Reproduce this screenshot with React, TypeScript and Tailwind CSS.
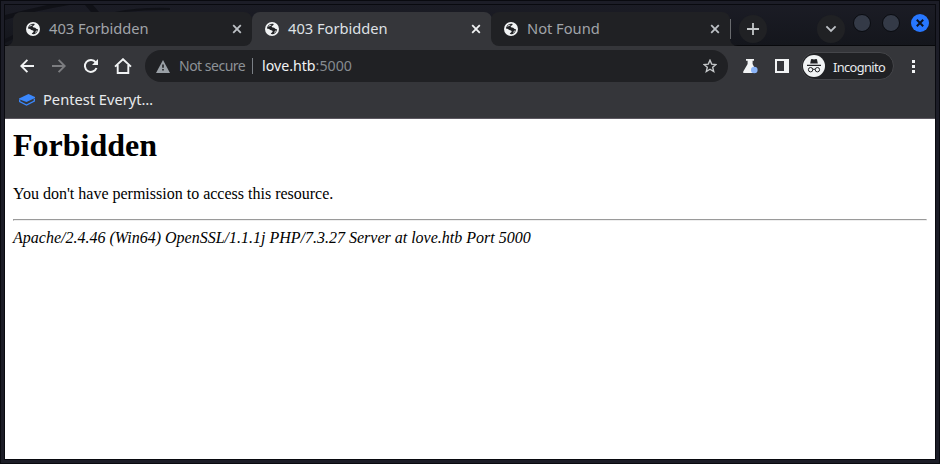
import React from "react";
import clsx from "clsx";

function Globe() {
  return (
    <svg width="14" height="14" viewBox="0 0 14 14" className="block shrink-0">
      <circle cx="7" cy="7" r="7" fill="#f1f3f4" />
      <path
        d="M8.600 1.900c.3 1.500-1.800 1.500-2 2.900 0 1 2.800.7 3.200 1.500.5.9 1.300.9 2.300.9-.1 2-1.500 4-3.400 4.700-1 .4-2 .4-2.900.2.200-1.200 1.500-1.300 1.800-2.300.2-.9-.3-1.500-1.400-1.600C4.800 8.100 4.600 6.800 3.200 6.700L1.900 6.400C2.300 3.400 5.300 1.200 8.600 1.900z"
        fill="#202124"
      />
      <path d="M6.300 3.200L4.400 3.500 3.800 4.700M10.800 8.500L9.500 10.500" stroke="#f1f3f4" strokeWidth=".9" fill="none" />
    </svg>
  );
}

function Cross({ color }: { color: string }) {
  return (
    <svg width="10" height="10" viewBox="0 0 10 10" className="block shrink-0">
      <path d="M1.2 1.2l7.6 7.6M8.8 1.2L1.2 8.8" stroke={color} strokeWidth="1.8" />
    </svg>
  );
}

function Tab({ title, shape, wrap, active }: { title: string; shape: string; wrap: string; active?: boolean }) {
  return (
    <div className={clsx("h-[34px] shrink-0 bg-[linear-gradient(#35363a,#35363a)] bg-size-[12px_12px] bg-no-repeat", wrap)}>
      <div
        className={clsx(
          "flex h-full items-center pl-[13px]",
          shape,
          active ? "bg-[#35363a] pr-[11px] text-[#dfe1e5]" : "bg-[#202124] pr-[10px] text-[#a0a4a9]",
        )}
      >
        <Globe />
        <span className="ml-[9px] flex-1 pb-[2px] text-[14.67px] leading-5 whitespace-nowrap">{title}</span>
        <Cross color={active ? "#f1f3f4" : "#bdc1c6"} />
      </div>
    </div>
  );
}

// Concave foot that joins a tab to the toolbar.
function Foot({ flip }: { flip?: boolean }) {
  return (
    <svg width="8" height="8" viewBox="0 0 8 8" className={clsx("block shrink-0 self-end", flip && "-scale-x-100")}>
      <path d="M8 0v8H0c5 0 8-3 8-8z" fill="#202124" />
    </svg>
  );
}

function Arrow({ flip }: { flip?: boolean }) {
  return (
    <svg width="14" height="14" viewBox="0 0 14 14" className={clsx("block shrink-0", flip && "-scale-x-100")}>
      <path d="M14 7H1.3M7.4.8L1.3 7l6.1 6.2" fill="none" stroke={flip ? "#7c7d80" : "#f1f3f4"} strokeWidth="1.9" />
    </svg>
  );
}

function TabStrip() {
  return (
    <div className="relative flex h-[41px] bg-linear-to-b from-[#1b1c25] to-[#14161c] pt-[7px] shadow-[inset_0_-1px_0_#08090c]">
      <svg width="240" height="41" viewBox="0 0 240 41" className="absolute top-0 left-0">
        <path d="M0 10Q20 5 42 0h22Q28 6 0 15zM0 34l8-4v4l-8 4zM80 0h8l6 7h-8zM110 7q25-5 55-4v2q-28 0-45 2z" fill="#101117" />
      </svg>
      <div className="relative flex h-[34px]">
        <Foot />
        <Tab title="403 Forbidden" wrap="w-[239px] bg-right-bottom" shape="rounded-t-lg rounded-br-lg" />
        <Tab title="403 Forbidden" wrap="w-[240px] bg-bottom" shape="rounded-t-lg" active />
        <Tab title="Not Found" wrap="-ml-px w-[239px] bg-left-bottom" shape="rounded-t-lg rounded-bl-lg" />
        <div className="mt-[7px] h-5 w-px bg-[#696b6f]" />
        <div className="-ml-px self-end">
          <Foot flip />
        </div>
      </div>
      <div className="mt-[3px] ml-px flex size-7 items-center justify-center rounded-full bg-[#202124]">
        <svg width="12" height="12" viewBox="0 0 12 12">
          <path d="M6 0v12M0 6h12" stroke="#c4c7c9" strokeWidth="1.8" />
        </svg>
      </div>
      <div className="mt-[3px] ml-[50px] flex size-7 items-center justify-center rounded-full bg-[#202124]">
        <svg width="12" height="8" viewBox="0 0 12 8">
          <path d="M1.4 1.3L6 5.9l4.6-4.6" fill="none" stroke="#bdc1c6" strokeWidth="1.8" />
        </svg>
      </div>
      <div className="mt-[2px] ml-2 size-[18px] rounded-full border border-[#090b10] bg-[#343a47]" />
      <div className="mt-[2px] ml-[11px] size-[18px] rounded-full border border-[#090b10] bg-[#343a47]" />
      <div className="mt-[2px] ml-[11px] flex size-[18px] items-center justify-center rounded-full bg-[#2777ff]">
        <svg width="8" height="8" viewBox="0 0 8 8">
          <path d="M.8.8l6.4 6.4M7.2.8L.8 7.2" stroke="#0b1220" strokeWidth="2" />
        </svg>
      </div>
    </div>
  );
}

function Toolbar() {
  return (
    <div className="flex h-10 items-center pl-[15px]">
      <Arrow />
      <div className="ml-[18px]">
        <Arrow flip />
      </div>
      <svg width="16" height="16" viewBox="0 0 16 16" className="ml-[17px] block">
        <path d="M13.5 10A6 6 0 1 1 12.7 4.3" fill="none" stroke="#f1f3f4" strokeWidth="2" />
        <path d="M15 1v6H9z" fill="#f1f3f4" />
      </svg>
      <svg width="18" height="16" viewBox="0 0 18 16" className="ml-[15px] block">
        <path d="M1 8.600L9 1.200l8 7.400M3.700 7v8h10.600V7" fill="none" stroke="#f1f3f4" strokeWidth="1.900" />
      </svg>
      <div className="ml-[13px] flex h-8 w-[583px] items-center rounded-full bg-[#202124] px-[11px]">
        <svg width="14" height="13" viewBox="0 0 14 13" className="block">
          <path d="M7 0l7 13H0z" fill="#9aa0a6" />
          <path d="M6.200 4.600h1.600v3.200H6.200zM6.200 9h1.600v1.600H6.200z" fill="#202124" />
        </svg>
        <span className="ml-[9px] w-[67px] text-[14px] leading-5 tracking-[-0.5px] whitespace-nowrap text-[#8d9297]">
          Not secure
        </span>
        <div className="ml-[6px] h-4 w-px bg-[#7b8086]" />
        <span className="ml-[9px] flex-1 text-[14.2px] leading-5 text-[#868b90]">
          <span className="text-[#f1f3f4]">love.htb</span>:5000
        </span>
        <svg width="14" height="14" viewBox="0 0 14 14" className="block">
          <path
            d="M7 1.200l1.700 3.900 4.200.400-3.200 2.800 1 4.200L7 10.200l-3.700 2.300 1-4.200-3.200-2.800 4.200-.400z"
            fill="none"
            stroke="#c4c7c9"
            strokeWidth="1.400"
          />
        </svg>
      </div>
      <svg width="15" height="15" viewBox="0 0 15 15" className="ml-[15px] block">
        <path d="M3 0h8v1.800H9.600V5l3.300 6.500c.5 1.300 0 2.500-1.100 2.500H1C0 14 0 13 .4 12.200L4.600 5V1.800H3z" fill="#f1f3f4" />
        <circle cx="11.300" cy="11" r="3.300" fill="#8ab4f8" />
      </svg>
      <svg width="14" height="14" viewBox="0 0 14 14" className="ml-[17px] block">
        <path d="M0 0h14v14H0zM2 2v10h7V2z" fill="#f1f3f4" fillRule="evenodd" />
      </svg>
      <div className="ml-[12px] flex h-7 w-[93px] items-center rounded-full border border-[#45464a] bg-[#202124] pl-px">
        <svg width="22" height="22" viewBox="0 0 22 22" className="block shrink-0">
          <circle cx="11" cy="11" r="11" fill="#f1f3f4" />
          <path d="M4 9.800h14v1.200H4zM7.200 8.600l.8-4.100q.2-.7 1-.5l2 .5 2-.5q.8-.2 1 .5l.8 4.100z" fill="#202124" />
          <circle cx="7.600" cy="14.700" r="2.200" fill="none" stroke="#202124" />
          <circle cx="14.400" cy="14.700" r="2.200" fill="none" stroke="#202124" />
          <path d="M9.800 14.500q1.200-.7 2.400 0" fill="none" stroke="#202124" />
        </svg>
        <span className="ml-2 pt-px text-[12.800px] leading-5 tracking-[-0.6px] text-[#e8eaed]">Incognito</span>
      </div>
      <svg width="3" height="13" viewBox="0 0 3 13" className="ml-[18px] block">
        <path d="M0 0h3v3H0zM0 5h3v3H0zM0 10h3v3H0z" fill="#f1f3f4" />
      </svg>
    </div>
  );
}

export default function App() {
  return (
    <div className="h-[464px] w-[940px] border border-[#090a0f] bg-[#1c1d27] p-[3px] font-['Noto_Sans',sans-serif]">
      <div className="flex h-[456px] w-[932px] flex-col border border-[#090a0f] bg-white">
        <TabStrip />
        <div className="h-[73px] border-b border-[#5c5860] bg-[#35363a]">
          <Toolbar />
          <div className="flex h-[27px] items-center pl-[14px]">
            <svg width="16" height="12" viewBox="0 0 16 12" className="mt-px block">
              <path d="M0 4.500L9.500 0 16 3v1L7.500 8 0 5.200z" fill="#3b88fd" />
              <path d="M.7 5.500v2.200l6.800 3.300 7.800-4V4.800" fill="none" stroke="#3b88fd" strokeWidth="1.300" />
            </svg>
            <span className="ml-2 pb-[2px] text-[14.67px] leading-5 text-[#e8eaed]">Pentest Everyt…</span>
          </div>
        </div>
        <main className="flex-1 px-2 pt-2 font-['Liberation_Serif',serif] text-base leading-[18px] text-black">
          <h1 className="text-[32px] leading-[37px] font-bold">Forbidden</h1>
          <p className="mt-[21px]">You don't have permission to access this resource.</p>
          <hr className="mt-4 mb-2 h-[2px] border border-t-[#9a9a9a] border-r-[#eee] border-b-[#eee] border-l-[#9a9a9a]" />
          <address>Apache/2.4.46 (Win64) OpenSSL/1.1.1j PHP/7.3.27 Server at love.htb Port 5000</address>
        </main>
      </div>
    </div>
  );
}
